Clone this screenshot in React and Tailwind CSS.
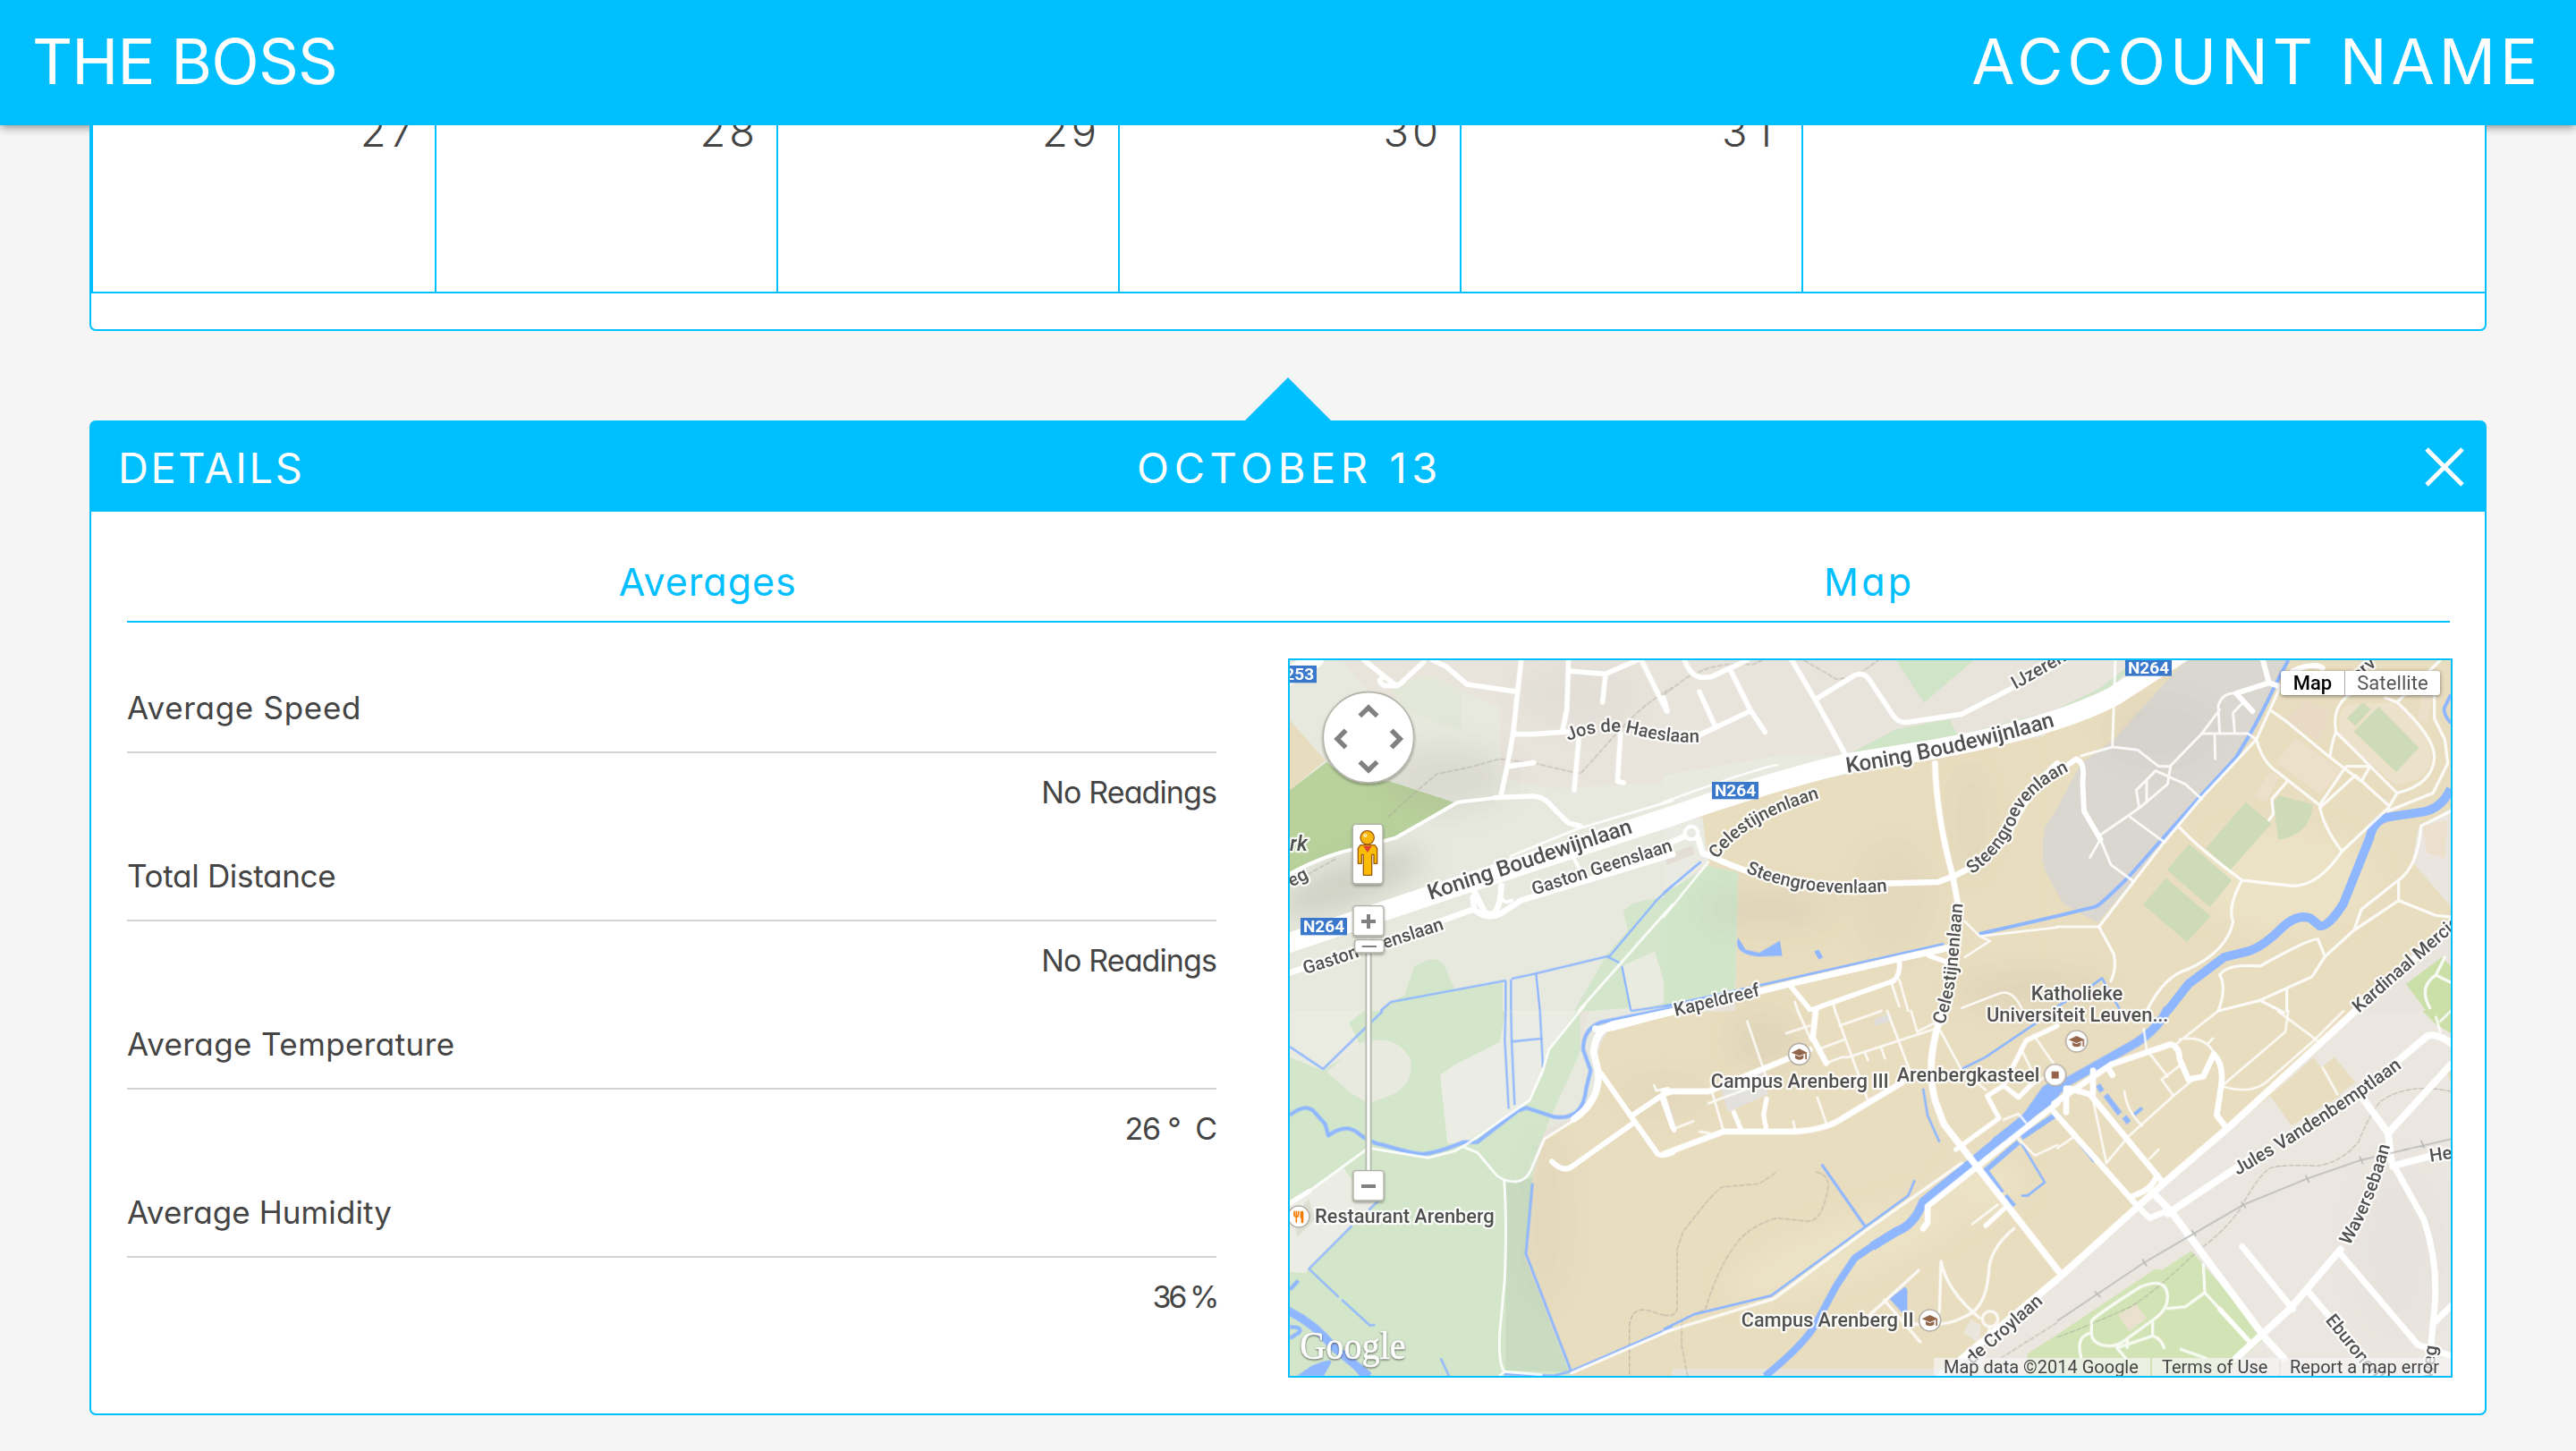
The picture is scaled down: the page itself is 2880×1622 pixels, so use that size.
import React from "react";

const gothic = "font-['Inter','Noto_Sans',sans-serif] [font-feature-settings:'cv11']";

/* The map is cut in six sectors; each one has its own origin on the sheet. */
const sectors = [
  {
    id: "nw", x: 0, y: 0,
    land: [
      ["M36 24H210L340 180L520 75L615 130L740 180L745 420L920 455L1320 430V1200H36Z", "#e7e9de"],
      ["M36 225L155 360L36 460Z", "#e8dcbf"],
      ["M36 460L160 365Q240 440 370 430L585 500L400 615L350 630L200 665L36 740Z", "#b9d29c"],
      ["M400 90L520 75L615 130L610 260L440 200L380 130Z", "#e2e7d8"],
      ["M420 1150L455 1050Q540 1000 560 1060L590 1130L750 1105V1200H340L375 1170Z", "#d3e6cb"],
      ["M1155 870Q1175 825 1320 820V1200H990L1100 1010L1170 930Z", "#d3e6cb"],
      ["M1150 1050L1260 1000L1290 1100L1310 1170L1180 1200Z", "#e9ebe0"],
    ],
    water: [
      [7, "M1320 780L1270 825L1110 1015L860 1075L780 1092M760 1098L375 1170L340 1200M760 1098V1200M778 1095V1200M862 1075L875 1200M1150 1050L1180 1200M1180 1200L1320 1180M1100 1018L1145 1040"],
    ],
    roads: [
      [9, "M1320 843L1005 1200M1320 495L1000 590L780 680L770 700"],
      [12, "M36 740Q150 680 240 660L390 620L600 500L730 485M750 780Q735 850 780 830M985 680L1010 730"],
      [17, "M285 24L380 100Q400 118 420 90L485 30M395 110H355Q325 95 350 80M515 24L560 45L630 105L800 130M812 24L800 130L785 270L765 380L745 475M970 24V60L1095 70L1200 24M970 60L965 190L950 265M785 272H850L1000 262M1095 70L1085 165M1215 24L1300 195M1005 290L990 460M1145 270L1135 430L1155 435M770 380L855 368M725 485L850 480Q890 480 920 520L970 570L1010 580"],
      [20, "M36 1072L400 950L650 860M650 820L655 860Q700 900 750 870L810 830L1320 675M655 800L690 870Q740 900 745 780"],
    ],
    paths: ["M365 550L430 490L530 405L630 385L740 355L860 370L1010 405L1060 350Q1130 270 1180 220Q1240 160 1320 115M36 780L100 740L190 690"],
    labels: [
      { t: "Koning Boudewijnlaan", d: "M508 828L1200 598", s: 73 },
      { t: "Gaston Geenslaan", d: "M855 812L1340 657", s: 61 },
      { t: "Gaston Geenslaan", d: "M88 1078L580 918", s: 61 },
      { t: "Jos de Haeslaan", d: "M970 295Q1090 245 1200 275T1430 298", s: 61 },
      { t: "rk", d: "M36 662H200", s: 70, italic: true },
      { t: "eg", d: "M42 785L160 725", s: 61 },
    ],
    shields: [[72, 888, "N264"], [-30, 42, "N253"]],
  },
  {
    id: "n", x: 1290, y: 0,
    land: [
      ["M0 410L380 345H600L620 360L0 560Z", "#e8eadf"],
      ["M780 24H1040L873 167Z", "#d0e4c7"],
      ["M620 340L780 255L960 222L985 275L1320 190V240L800 340Z", "#d0e4c7"],
      ["M120 540L500 430L1320 270V2400H-200L-465 2000L-440 1760L-400 1630L-210 1500L-200 1330L30 1210L240 1200L250 735L150 715Z", "#e9ddbf"],
      ["M0 590L130 550L150 700L0 820Z", "#e9ebe2"],
      ["M5 680L95 645L105 675L10 710Z", "#e4ddd6"],
      ["M0 810L150 715L250 735L240 1130L0 1190Z", "#d1e5c9"],
      ["M1320 515L1280 580L1270 700L1320 795Z", "#dad6d0"],
    ],
    ponds: ["M250 955L275 995L320 1005L390 965L398 1015L320 1018Q240 1010 247 965Z", "M505 1000L520 995L535 1020L520 1028Z"],
    water: [
      [8, "M0 1185L320 1115L940 975M0 805L125 700"],
      [12, "M1058 942L1320 882"],
    ],
    roads: [
      [8, "M150 700L0 885M380 375Q300 390 0 500M1010 900L1060 950L1320 920M765 1110L790 1185M790 1095L820 1200M1000 1190L1130 1140Q1170 1130 1200 1190M1010 1020L1095 965L1060 950M440 1170L450 1200M570 1180L575 1200"],
      [17, "M70 24Q90 80 130 82L160 80L280 24M225 60L290 190L340 265M290 195L120 275M120 130L170 240M0 150L12 195M430 24L510 160L615 350M510 155L640 75Q670 60 690 90L770 210Q790 240 830 230L1000 205L1320 40M890 1015L960 1040M790 1030Q795 1080 770 1100L500 1195M420 1110L490 1195"],
      [20, "M910 370Q915 550 970 750L990 860M0 645L70 615M115 620L130 670L200 700Q400 790 650 775L920 768L980 745L1040 715Q1130 660 1180 560Q1250 430 1320 370"],
      [22, "M-230 1260Q-225 1265 -170 1255L0 1210L300 1140L420 1110L790 1025L970 985"],
      [12, "M71 603a22 22 0 1 0 44 0a22 22 0 1 0 -44 0"],
    ],
    paths: ["M0 140L80 80L150 50L210 38H300L330 24M470 24L580 88L640 80L720 24"],
    labels: [
      { t: "Koning Boudewijnlaan", d: "M615 402Q960 350 1330 240", s: 73 },
      { t: "Celestijnenlaan", d: "M180 692Q270 560 530 485", s: 60 },
      { t: "Steengroevenlaan", d: "M275 735Q480 830 790 795", s: 61 },
      { t: "Steengroevenlaan", d: "M1035 742Q1150 660 1190 545Q1240 450 1380 385", s: 61 },
      { t: "IJzeren", d: "M1180 122L1400 -2", s: 61 },
      { t: "Celestijnenlaan", d: "M940 1248Q975 1150 985 1050L1006 815", s: 61 },
      { t: "Kapeldreef", d: "M40 1218L360 1140", s: 61 },
      { t: "Katholieke", d: "M1232 1163H1700", s: 66 },
      { t: "Universiteit Leuven...", d: "M1083 1235H1900", s: 66 },
    ],
    shields: [[162, 432, "N264"]],
  },
  {
    id: "ne", x: 2610, y: 0,
    land: [
      ["M-40 270L190 170L410 24H1320V1200H-40Z", "#e9ddbf"],
      ["M430 24H780L730 120L650 290L480 480L360 630L240 780L135 905L20 840L-40 730L-50 640L-40 580L0 520L80 370L190 290Z", "#dad6d0"],
      ["M0 24H400L190 150L0 190Z", "#e9e5dd"],
      ["M-40 205L140 120L230 50V70L170 120L0 190Z", "#d0e4c7"],
      ["M1320 850L1190 700L1210 590L1320 520Z", "#eae6df"],
      ["M1225 580L1310 560L1300 690L1240 670Z", "#ece0cd"],
      ["M1320 890L980 1200H1320Z", "#e9e5de"],
      ["M1170 1110L1290 1020L1330 1060V1280L1270 1245Z", "#cbdfa9"],
      ["M770 215L830 150L920 195L880 295L800 250Z", "#e8dac4"],
      ["M735 365L800 285L955 395L880 475L780 400Z", "#ece0cb"],
      ["M950 260Q930 180 1000 170L1130 165Q1260 270 1255 360Q1230 440 1130 440L935 270Z", "#ece1cb"],
      ["M710 400L745 415L700 500L662 480Z", "#ece0cb"],
      ["M1225 120L1265 130L1240 235L1210 225Z", "#ece0cb"],
    ],
    pitches: ["M1025 165L1052 188L1000 245L972 218Z", "M1078 180L1213 317L1137 400L995 263Z", "M632 500L718 572L580 728L498 655Z", "M745 478L857 508Q850 610 742 626L725 500Z", "M443 640L586 762L512 852L368 727Z", "M365 755L515 883L435 970L288 843Z"],
    water: [
      [12, "M0 882L130 850Q150 840 240 750L480 480L600 350Q680 220 730 110L775 24M1320 140L1298 185Q1295 205 1320 235"],
      [8, "M110 1120L150 1090L210 1195M0 1185L60 1150"],
      [30, "M1320 455Q1290 520 1230 532L1110 550Q1060 560 1048 620L960 840Q910 920 880 915L850 890Q800 870 740 935Q680 990 640 1000L560 1020L440 1110L370 1200"],
    ],
    roads: [
      [9, "M195 24L185 315L80 345M185 315L270 325L340 380H380L370 440L275 520L145 610M330 395L265 460L275 520M300 430V500M380 378L485 270L545 190M545 268L540 180Q550 130 610 135M595 265L590 200L620 170M485 270H640L668 290M528 275L530 355M330 395L430 440L485 490M245 550L360 635M145 625L180 710L255 765M145 625L110 685M0 918H140"],
      [10, "M745 120L668 290L480 490L350 645L140 918L190 1010Q200 1060 180 1100M668 290Q690 370 740 400L880 510Q890 580 955 665M955 665Q870 790 780 780L620 762Q480 660 410 585M770 432L720 490L725 540L710 560M720 195L770 230L915 350L1020 430M1000 410L1110 510M1000 410L880 520M955 400L970 380L1050 380L1020 430M880 510L955 400M915 350Q920 300 935 265L1140 470M935 265Q920 180 980 140M955 665L1110 520L1140 470Q1260 440 1265 350Q1265 280 1140 165L1100 150M1140 165L1285 24M1110 530L1260 470L1310 370L1300 290L1265 220V140M1320 530L1220 580Q1210 720 1140 765L1020 860L995 930M1145 765V830L995 930M1145 830L1270 880L1320 885M620 762Q570 850 590 900Q570 1000 440 1060Q360 1080 300 1200M540 1200Q570 1120 545 1080Q570 1040 680 1050Q860 950 875 960L898 1018L855 1085L680 1165L540 1200M898 1018L995 930M770 1130V1200M680 1165L760 1205M1300 1020L1270 1080Q1210 1120 1250 1190M1270 1080L1320 1105"],
      [18, "M0 400L65 355Q95 370 85 430L90 530L145 625M690 24L710 100L600 135L655 195M710 100L740 110M790 60Q860 30 890 50"],
    ],
    labels: [
      { t: "Kardinaal Mercier", d: "M1012 1208L1500 782", s: 61 },
      { t: "erv", d: "M1010 95L1150 -30", s: 61 },
    ],
    shields: [[228, 19, "N264"]],
  },
  {
    id: "sw", x: 0, y: 1200,
    land: [
      ["M36 0H1010V140L900 390L870 450L850 560L825 830L980 1224H36Z", "#d3e6ca"],
      ["M36 0H285L235 40L275 120L145 200L36 155Z", "#eaebe1"],
      ["M160 205L270 110Q390 70 440 160Q455 250 370 285L300 310L240 275Z", "#e8eadf"],
      ["M760 0H1000L905 130L885 200L840 300L625 440L565 445L540 215L590 180L740 105Z", "#ebece3"],
      ["M36 640L215 525L245 565V640H330L100 865L90 880L36 875Z", "#ebece3"],
      ["M50 690L100 630L120 700L60 760Z", "#dcdfd2"],
      ["M1005 150L1040 0L1320 -20V10L1080 60Q1050 130 1070 210L1060 300L960 370L895 390Z", "#e7e9df"],
      ["M760 580L850 560L828 830L970 1210L760 1205Z", "#c9dbc0"],
      ["M1320 10L1110 60Q1050 130 1080 210Q1080 330 980 370L890 430L850 560L825 830L980 1224H1320Z", "#e9ddbf"],
    ],
    ponds: ["M60 1224L110 1190Q180 1160 175 1180L150 1224Z", "M190 1130L310 1215L305 1224H270Z"],
    water: [
      [7, "M348 0L148 195L36 120M760 0L757 95L770 328M778 0L780 100L790 316M875 0L885 190M780 103L885 92M245 720L100 865L200 960M210 968L305 1055L322 1053M330 640L300 668M542 1165L570 1224"],
      [8, "M980 1208L1320 1060M755 1218L920 1224L980 1208"],
      [9, "M850 578L828 815L980 1210"],
      [13, "M36 350Q85 310 115 335L155 380L165 418Q225 375 265 410Q300 440 350 450Q450 480 480 480Q520 480 620 440H665L800 335L830 325L920 355Q1020 370 1030 260L1045 200L1020 130Q1020 60 1080 38L1320 -10M36 935L64 905M36 1060Q85 1060 65 1080L36 1098"],
      [28, "M30 1005Q120 1050 180 1125L300 1224"],
    ],
    roads: [
      [9, "M1025 -20L905 130L885 200L840 300L625 450L590 470L500 493L300 460L100 605M1000 360L890 430L850 520Q835 570 790 573Q740 570 720 540L665 475L620 457M755 570Q765 700 757 900L740 1080Q735 1180 755 1210L880 1220M980 1215L1320 1068M740 1224L755 1210"],
      [16, "M100 605L36 645"],
      [23, "M1320 2L1120 45Q1060 65 1055 140L1070 200Q1080 300 990 362"],
      [18, "M1080 210L1185 360L1270 480Q1280 490 1320 475M915 505Q955 545 985 520L1190 375M1185 350L1290 280L1320 270M1285 290L1320 390"],
      [8, "M1258 250L1265 268L1305 258"],
    ],
    paths: ["M1175 1220V1060Q1180 990 1240 1005L1290 1020"],
    labels: [{ t: "Restaurant Arenberg", d: "M120 712H900", s: 66 }],
    pins: [[66, 690, "food"]],
  },
  {
    id: "s", x: 1290, y: 1200,
    land: [
      ["M1320 900L1130 1060L905 1225H1320Z", "#e9e5de"],
      ["M1320 1095L1200 1170V1225H1320Z", "#d2e4b5"],
      ["M190 250L330 200L350 280L215 340Z", "#e3e1dd"],
      ["M705 30L755 10L760 35L710 50Z", "#e0dedb"],
      ["M0 290L25 330L40 380L25 390Z", "#dddbd7"],
      ["M1030 1035L1065 1055L1060 1115L1005 1080Z", "#ebe6dc"],
    ],
    ponds: ["M757 965L810 925L817 935V1010L800 1012Z", "M1270 255L1320 220V300L1250 350L1150 440L1100 430L1200 355Z"],
    water: [
      [8, "M0 1068L100 1018L360 955L680 722L820 620L842 568M870 260L885 350L925 440M1250 40L1080 155L1000 195M1200 445L1278 575L1220 620H1200"],
      [10, "M530 515L675 722"],
      [18, "M1320 345L1200 425M1190 440L1080 535L1135 610M1145 620L1175 655"],
      [30, "M1320 270L1200 370L1030 510L870 640Q840 720 780 740L700 790"],
      [24, "M720 775L640 830L580 920L510 1050Q470 1120 340 1225"],
    ],
    roads: [
      [8, "M35 395L100 370M160 265L200 400M280 35L350 240M150 310L390 220M450 0L495 100M575 0L685 300M410 75L490 50M545 175L600 155H620L910 60M590 50L730 0M530 125L610 95M750 0L825 200M830 0L850 70L930 30M515 290L545 375M930 70L1000 200L1080 265M1140 365L1190 345L1215 375M1190 430L1245 485L1320 450M1120 650L1035 715M675 140L685 165M730 125L742 160M120 405L155 410M435 370L440 400M1205 140L1240 210M1240 80L1310 180M1215 265L1280 220"],
      [10, "M1000 510L680 735L370 965L0 1078M1175 730Q1090 800 1090 880Q1080 1000 1010 1025Q950 1060 840 1050M930 840L925 1010M930 840Q950 940 1060 1030M1069 1033a26 26 0 1 0 52 0a26 26 0 1 0 -52 0M1095 1060L1085 1090M690 1020L855 870M740 970L860 1110"],
      [16, "M1140 665L1080 720M345 295L335 350L345 400M235 340L260 400M0 290L35 400M980 465L1125 360L1085 285L1140 250L1190 290L1230 250M1145 240L1215 100L1320 50"],
      [20, "M0 270H150L490 130M510 0L500 90L545 175M0 480L200 405L430 405Q540 400 600 360L800 240M1320 310L1180 420L885 655L885 710L870 730"],
      [23, "M940 -20L920 50Q880 180 910 300L940 380L1330 880"],
    ],
    paths: ["M0 1020Q50 1030 45 980V800L65 740Q180 590 200 590L320 580L380 540M510 540Q560 550 550 600Q530 710 480 705L380 695Q280 720 230 800Q180 870 140 1000L60 1040V1120L80 1225", "M1130 1165L1320 1045"],
    labels: [
      { t: "Campus Arenberg III", d: "M158 258H1000", s: 66 },
      { t: "Arenbergkasteel", d: "M782 238H1400", s: 66 },
      { t: "Campus Arenberg II", d: "M260 1060H1000", s: 66 },
      { t: "de Croylaan", d: "M1035 1188L1320 938", s: 61 },
    ],
    pins: [[455, 145, "school"], [1313, 215, "place"], [893, 1038, "school"]],
  },
  {
    id: "se", x: 2610, y: 1200,
    land: [
      ["M-30 920L0 890L360 575L715 285L1000 0H1320V1224H-340Z", "#ebe7e0"],
      ["M-30 880V0H1000L715 285L360 575L0 880Z", "#e9ddbf"],
      ["M715 285L860 155L950 285L785 385Z", "#e9ddbf"],
      ["M885 190L930 155L1000 240L940 285Z", "#e9ddbf"],
      ["M1305 200L1320 180V240Z", "#e9ddbf"],
      ["M0 1085L330 865L350 870L450 805L700 1095L620 1165L560 1225H-100V1150Z", "#d2e4b5"],
      ["M205 1020L265 985L300 1030L242 1075Z", "#e9e1cd"],
      ["M1225 0H1320V75L1270 45Z", "#cbdfa9"],
    ],
    water: [
      [12, "M0 345L125 505M258 348L285 325"],
      [18, "M137 248L150 270M162 282L210 345M225 355L240 375"],
      [30, "M372 -10Q340 60 260 110L30 240L-10 275"],
    ],
    roads: [
      [8, "M290 60L300 130L370 220M350 230L390 285L240 420L165 510M415 180L350 230M450 235L390 285M120 300L165 510M0 460L60 420M225 270Q235 340 285 385M400 110L540 0M410 95Q500 80 530 150M505 110L522 92M560 245L765 70L775 0M560 255Q650 280 700 240L860 100L960 0M740 0L880 105M310 495L340 465M890 190L940 280M1270 20L1285 70M1320 0L1285 35"],
      [10, "M115 1080V1040Q130 1020 280 925Q370 890 370 960Q370 1000 330 1030L220 1110Q190 1130 150 1120Q115 1110 115 1080M370 998L430 992L495 945L490 850M495 945L550 1005M320 1040V1090L200 1130L230 1165M320 1090Q350 1100 358 1130M115 1080Q60 1090 80 1160M415 1135L500 1165M235 1100V1130"],
      [16, "M545 1000L650 1115"],
      [20, "M-10 310L180 180L380 112Q410 120 410 160L440 230L490 220L525 145Q560 180 550 250L535 350L570 395M170 190L185 215M40 260L110 280L350 570M120 280V200M255 620Q320 600 335 550M265 650L310 695L370 670M30 340V260M-10 340L265 650"],
      [24, "M1330 -290L1000 0L570 395L360 575L0 900L-420 1250"],
      [24, "M320 610L380 670L700 1100L760 1165M370 680L640 500M1140 170L1240 85Q1270 70 1330 115M1030 300L1110 410M1320 180L1110 410L1120 500M950 800L780 1000L600 1165M1125 520L1240 490L1320 470"],
      [21, "M1130 520L1230 700Q1280 850 1265 1000L1245 1220M950 815L1210 1120L1330 1160M845 945L960 1080M620 790L790 1000M1260 1050L1320 990"],
    ],
    paths: ["M470 805Q560 740 610 670Q680 540 720 525Q760 515 870 520Q950 510 1010 440Q1060 320 1090 300Q1180 240 1320 270M0 1095Q120 1050 250 990Q330 940 460 815"],
    rails: ["M0 1040L290 845L625 650L840 562L1020 500L1320 430"],
    ticks: "M125 940L145 960M285 832L300 856M450 735L466 755M617 640L633 662M833 550L845 576M1014 488L1026 514M1220 435L1232 460",
    labels: [
      { t: "Jules Vandenbemptlaan", d: "M605 552Q890 390 1190 165", s: 62 },
      { t: "Waversebaan", d: "M980 788Q1070 640 1122 430", s: 61 },
      { t: "He", d: "M1252 506L1420 480", s: 61 },
      { t: "Eburonenlaan", d: "M898 1038L1150 1350", s: 61 },
      { t: "weg", d: "M1258 1235L1285 1060", s: 61 },
    ],
    pins: [[65, 102, "school"]],
  },
];

const at = (s) => `translate(${s.x} ${s.y})`;

function Layer({ draw }) {
  return sectors.map((s) => (
    <g key={s.id} transform={at(s)}>
      {draw(s)}
    </g>
  ));
}

function Pin({ x, y, kind }) {
  return (
    <g transform={`translate(${x} ${y})`}>
      <circle r="36" fill="#fff" stroke="#b5b0a8" strokeWidth="5" />
      {kind === "school" && (
        <g fill="#93654a">
          <path d="M-27 -5L0 -18L27 -5L0 6Z" />
          <path d="M-14 3L0 9L14 3V14Q0 24 -14 14Z" />
          <path d="M20 -3H25V18H20Z" />
        </g>
      )}
      {kind === "place" && <rect x="-12" y="-12" width="24" height="24" fill="#93654a" />}
      {kind === "food" && (
        <g fill="none" stroke="#f57c00" strokeLinecap="round">
          <path d="M-15 -17V-6Q-15 0 -8 0Q-1 0 -1 -6V-17M-8 -17V18" strokeWidth="5" />
          <path d="M12 -15V18" strokeWidth="8" />
          <path d="M9 -14V2" strokeWidth="8" />
        </g>
      )}
    </g>
  );
}

function MapSheet() {
  return (
    <svg viewBox="36 24 3894 2400" className="block h-[800px] w-[1298px]">
      <defs>
        <filter id="haze" x="-50%" y="-50%" width="200%" height="200%">
          <feGaussianBlur stdDeviation="45" />
        </filter>
        <filter id="drop" x="-30%" y="-30%" width="160%" height="170%">
          <feDropShadow dx="0" dy="5" stdDeviation="5" floodOpacity="0.35" />
        </filter>
      </defs>
      <rect x="36" y="24" width="3894" height="2400" fill="#e8e4dc" />
      <Layer draw={(s) => s.land.map(([d, c]) => <path key={d} d={d} fill={c} />)} />
      {/* Hill shading */}
      <g filter="url(#haze)" fill="#8d8a80">
        <ellipse cx="560" cy="420" rx="210" ry="110" opacity="0.14" />
        <ellipse cx="240" cy="770" rx="260" ry="70" opacity="0.26" transform="rotate(-20 240 770)" />
        <ellipse cx="1000" cy="140" rx="200" ry="100" opacity="0.05" />
        <ellipse cx="1640" cy="860" rx="220" ry="60" opacity="0.1" />
        <ellipse cx="2060" cy="820" rx="130" ry="190" opacity="0.05" />
        <ellipse cx="2320" cy="560" rx="60" ry="190" opacity="0.07" />
        <ellipse cx="2520" cy="1130" rx="260" ry="60" opacity="0.09" />
        <ellipse cx="2950" cy="260" rx="180" ry="110" opacity="0.06" />
        <ellipse cx="1620" cy="1300" rx="110" ry="90" opacity="0.1" />
        <ellipse cx="900" cy="1900" rx="70" ry="280" opacity="0.06" />
        <ellipse cx="1290" cy="1480" rx="150" ry="60" opacity="0.06" />
        <ellipse cx="3750" cy="2000" rx="150" ry="300" opacity="0.04" />
      </g>
      <g filter="url(#haze)" fill="#f1ebcf" opacity="0.4">
        <ellipse cx="3370" cy="760" rx="300" ry="170" />
        <ellipse cx="1900" cy="2000" rx="420" ry="90" transform="rotate(-20 1900 2000)" />
        <ellipse cx="2370" cy="1780" rx="120" ry="90" />
      </g>
      <Layer draw={(s) => (s.pitches || []).map((d) => <path key={d} d={d} fill="#cddbb9" />)} />
      <g fill="none" stroke="#a9a69d" strokeWidth="4" strokeDasharray="18 5" opacity="0.6">
        <Layer draw={(s) => (s.paths || []).map((d) => <path key={d} d={d} />)} />
      </g>
      <g fill="none" stroke="#8fb7ff" strokeLinejoin="round">
        <Layer draw={(s) => (s.ponds || []).map((d) => <path key={d} d={d} fill="#8fb7ff" stroke="none" />)} />
        <Layer draw={(s) => s.water.map(([w, d]) => <path key={d} d={d} strokeWidth={w} />)} />
      </g>
      <g fill="none" stroke="#fff" strokeLinecap="round" strokeLinejoin="round">
        <Layer
          draw={(s) => s.roads.map(([w, d]) => <path key={d} d={d} strokeWidth={w} opacity={w < 11 ? 0.85 : 1} />)}
        />
        <path
          d="M-20 990L600 782L1320 546Q1600 445 1900 370L2200 322Q2600 250 2800 145L3040 -10"
          strokeWidth="66"
          strokeLinecap="butt"
        />
        <path d="M30 80L120 20" strokeWidth="60" />
      </g>
      <g fill="none" stroke="#b9b9b9" strokeWidth="5">
        <Layer draw={(s) => (s.rails || []).map((d) => <path key={d} d={d + (s.ticks || "")} />)} />
      </g>
      <Layer
        draw={(s) =>
          (s.shields || []).map(([x, y, t]) => (
            <g key={x}>
              <rect x={x} y={y} width="156" height="58" fill="#3a78cb" />
              <text x={x + 78} y={y + 49} textAnchor="middle" className="fill-white font-['Roboto',sans-serif] text-[57px] font-bold">
                {t}
              </text>
            </g>
          ))
        }
      />
      <Layer
        draw={(s) =>
          s.labels.map(({ t, d, s: size, italic }, i) => (
            <g key={d}>
              <path id={`${s.id}-${i}`} d={d} fill="none" />
              <text
                fontSize={size}
                fontStyle={italic ? "italic" : "normal"}
                className="fill-[#505050] stroke-white/85 stroke-[14px] font-['Roboto',sans-serif] font-medium tracking-[-0.4px] [paint-order:stroke] [stroke-linejoin:round]"
              >
                <textPath href={`#${s.id}-${i}`}>{t}</textPath>
              </text>
            </g>
          ))
        }
      />
      <Layer draw={(s) => (s.pins || []).map(([x, y, kind]) => <Pin key={x} x={x} y={y} kind={kind} />)} />

      {/* Pan wheel */}
      <g filter="url(#drop)">
        <circle cx="300" cy="283" r="152" fill="#fff" stroke="#b4b4aa" strokeWidth="5" />
      </g>
      <g fill="none" stroke="#808080" strokeWidth="16">
        <path d="M271 211L300 183L329 211" />
        <path d="M271 365L300 393L329 365" />
        <path d="M224 259L195 288L224 317" />
        <path d="M377 259L406 288L377 317" />
      </g>

      {/* Street view figure */}
      <rect x="247" y="574" width="101" height="200" rx="11" fill="#fff" stroke="#b0b0a6" strokeWidth="4" filter="url(#drop)" />
      <g stroke="#9c5a10" strokeWidth="4" strokeLinejoin="round">
        <path d="M273 644H321L329 655V706H318V676H311V745H283V676H277V706H265V655Z" fill="#fbbc05" />
        <circle cx="296" cy="619" r="23" fill="#fbb70c" />
      </g>
      <path d="M282 647H311L297 669Z" fill="#dd4332" />
      <circle cx="289" cy="612" r="7" fill="#fde39a" />

      {/* Zoom slider */}
      <rect x="289" y="990" width="22" height="760" fill="#b6bcae" />
      <rect x="295" y="990" width="10" height="760" fill="#fff" />
      <g fill="#fff" stroke="#b0b0a6" strokeWidth="4" filter="url(#drop)">
        <rect x="249" y="848" width="102" height="100" rx="9" />
        <rect x="254" y="962" width="98" height="43" rx="9" />
        <rect x="249" y="1736" width="102" height="100" rx="9" />
      </g>
      <path d="M276 900H324M300 876V924M276 1788H324" stroke="#808080" strokeWidth="12" />
      <path d="M278 984H327" stroke="#808080" strokeWidth="6" />

      <text
        x="70"
        y="2367"
        textLength="355"
        lengthAdjust="spacingAndGlyphs"
        className="fill-white stroke-white stroke-[2px] font-['Liberation_Serif',serif] text-[136px] drop-shadow-[0_3px_3px_rgba(0,0,0,0.6)]"
      >
        Google
      </text>
    </svg>
  );
}

function MapPanel() {
  return (
    <div className="relative mt-10 h-[804px] w-[1302px] shrink-0 overflow-hidden border-2 border-[#00bfff] font-['Roboto',sans-serif]">
      <MapSheet />
      <div className="absolute top-3 right-3 flex h-[27px] rounded-[3px] bg-white text-[22px] leading-[28px] shadow-[0_1px_4px_rgba(0,0,0,0.5)]">
        <span className="w-[72px] border-r border-[#aaa] text-center font-medium text-black">Map</span>
        <span className="w-[106px] text-center tracking-[0.1px] text-[#565656]">Satellite</span>
      </div>
      <div className="absolute right-0 bottom-0 flex h-5 gap-0.5 text-[20px] leading-5 whitespace-nowrap text-[#444]">
        <span className="w-[242px] bg-[#f5f5f5]/70 pl-[11px]">Map data ©2014 Google</span>
        <span className="w-[142px] bg-[#f5f5f5]/70 pl-[11px]">Terms of Use</span>
        <span className="w-[190px] bg-[#f5f5f5]/70 pl-[10px]">Report a map error</span>
      </div>
    </div>
  );
}

const readings = [
  { label: "Average Speed", value: "No Readings", l: "tracking-[0.7px]", v: "tracking-[-0.9px]" },
  { label: "Total Distance", value: "No Readings", l: "tracking-[-0.3px]", v: "tracking-[-0.9px]" },
  { label: "Average Temperature", value: "26 °  C", l: "tracking-[0.4px]", v: "tracking-[-1.2px]" },
  { label: "Average Humidity", value: "36 %", l: "tracking-[0.1px]", v: "tracking-[-3.4px]" },
];

export default function App() {
  return (
    <div className={`relative h-[1622px] w-[2880px] overflow-hidden bg-[#f5f5f5] text-[#444] ${gothic}`}>
      <div className="absolute inset-x-0 top-0 h-[140px] shadow-[0_3px_10px_-1px_rgba(0,0,0,0.45)]" />
      <header className="relative z-20 flex h-[140px] items-center justify-between bg-[#00bfff] pr-[38px] pb-[3px] pl-[36px] text-[70px] font-[380] text-white">
        <span className="tracking-[-0.9px]">THE BOSS</span>
        <span className="tracking-[5px]">ACCOUNT NAME</span>
      </header>

      <section className="relative z-10 mx-[100px] -mt-10 h-[270px] rounded-[7px] border-2 border-[#00bfff] bg-white">
        <div className="flex h-[226px] border-b-2 border-l-2 border-[#00bfff] text-right text-[47px] leading-[90px] font-[350] tracking-[4px]">
          <div className="w-[384px] border-r-2 border-[#00bfff] pr-5">27</div>
          <div className="w-[382px] border-r-2 border-[#00bfff] pr-5">28</div>
          <div className="w-[382px] border-r-2 border-[#00bfff] pr-5">29</div>
          <div className="w-[382px] border-r-2 border-[#00bfff] pr-5">30</div>
          <div className="w-[382px] border-r-2 border-[#00bfff] pr-6 tracking-[9px]">31</div>
        </div>
      </section>

      <svg viewBox="0 0 96 48" className="mx-auto mt-[52px] block h-12 w-24">
        <path d="M0 48L48 0L96 48Z" fill="#00bfff" />
      </svg>

      <section className="mx-[100px] h-[1112px] rounded-[7px] border-2 border-[#00bfff] bg-white">
        <div className="grid h-[100px] grid-cols-3 items-center bg-[#00bfff] pt-[3px] pr-[23px] pl-[30px] text-[47px] font-[380] text-white">
          <span className="tracking-[2.6px]">DETAILS</span>
          <span className="pr-[3px] text-center tracking-[5.6px]">OCTOBER 13</span>
          <svg viewBox="0 0 44 44" className="mb-[3px] h-11 w-11 justify-self-end">
            <path d="M2 2L42 42M42 2L2 42" stroke="#fff" strokeWidth="5" />
          </svg>
        </div>

        <div className="mr-[39px] ml-10 flex h-[124px] items-center border-b-2 border-[#00bfff] pt-[34px] text-center text-[43px] text-[#00bfff]">
          <h2 className="w-1/2 tracking-[1px]">Averages</h2>
          <h2 className="w-1/2 tracking-[3.4px]">Map</h2>
        </div>

        <div className="mr-9 ml-10 flex justify-between">
          <dl className="w-[1218px] pt-[46px] text-[35px]">
            {readings.map((r) => (
              <React.Fragment key={r.label}>
                <dt className={`h-[100px] border-b-2 border-[#d3d3d3] leading-[98px] ${r.l}`}>{r.label}</dt>
                <dd className={`h-[88px] text-right text-[34px] leading-[88px] font-[370] whitespace-pre ${r.v}`}>{r.value}</dd>
              </React.Fragment>
            ))}
          </dl>
          <MapPanel />
        </div>
      </section>
    </div>
  );
}
